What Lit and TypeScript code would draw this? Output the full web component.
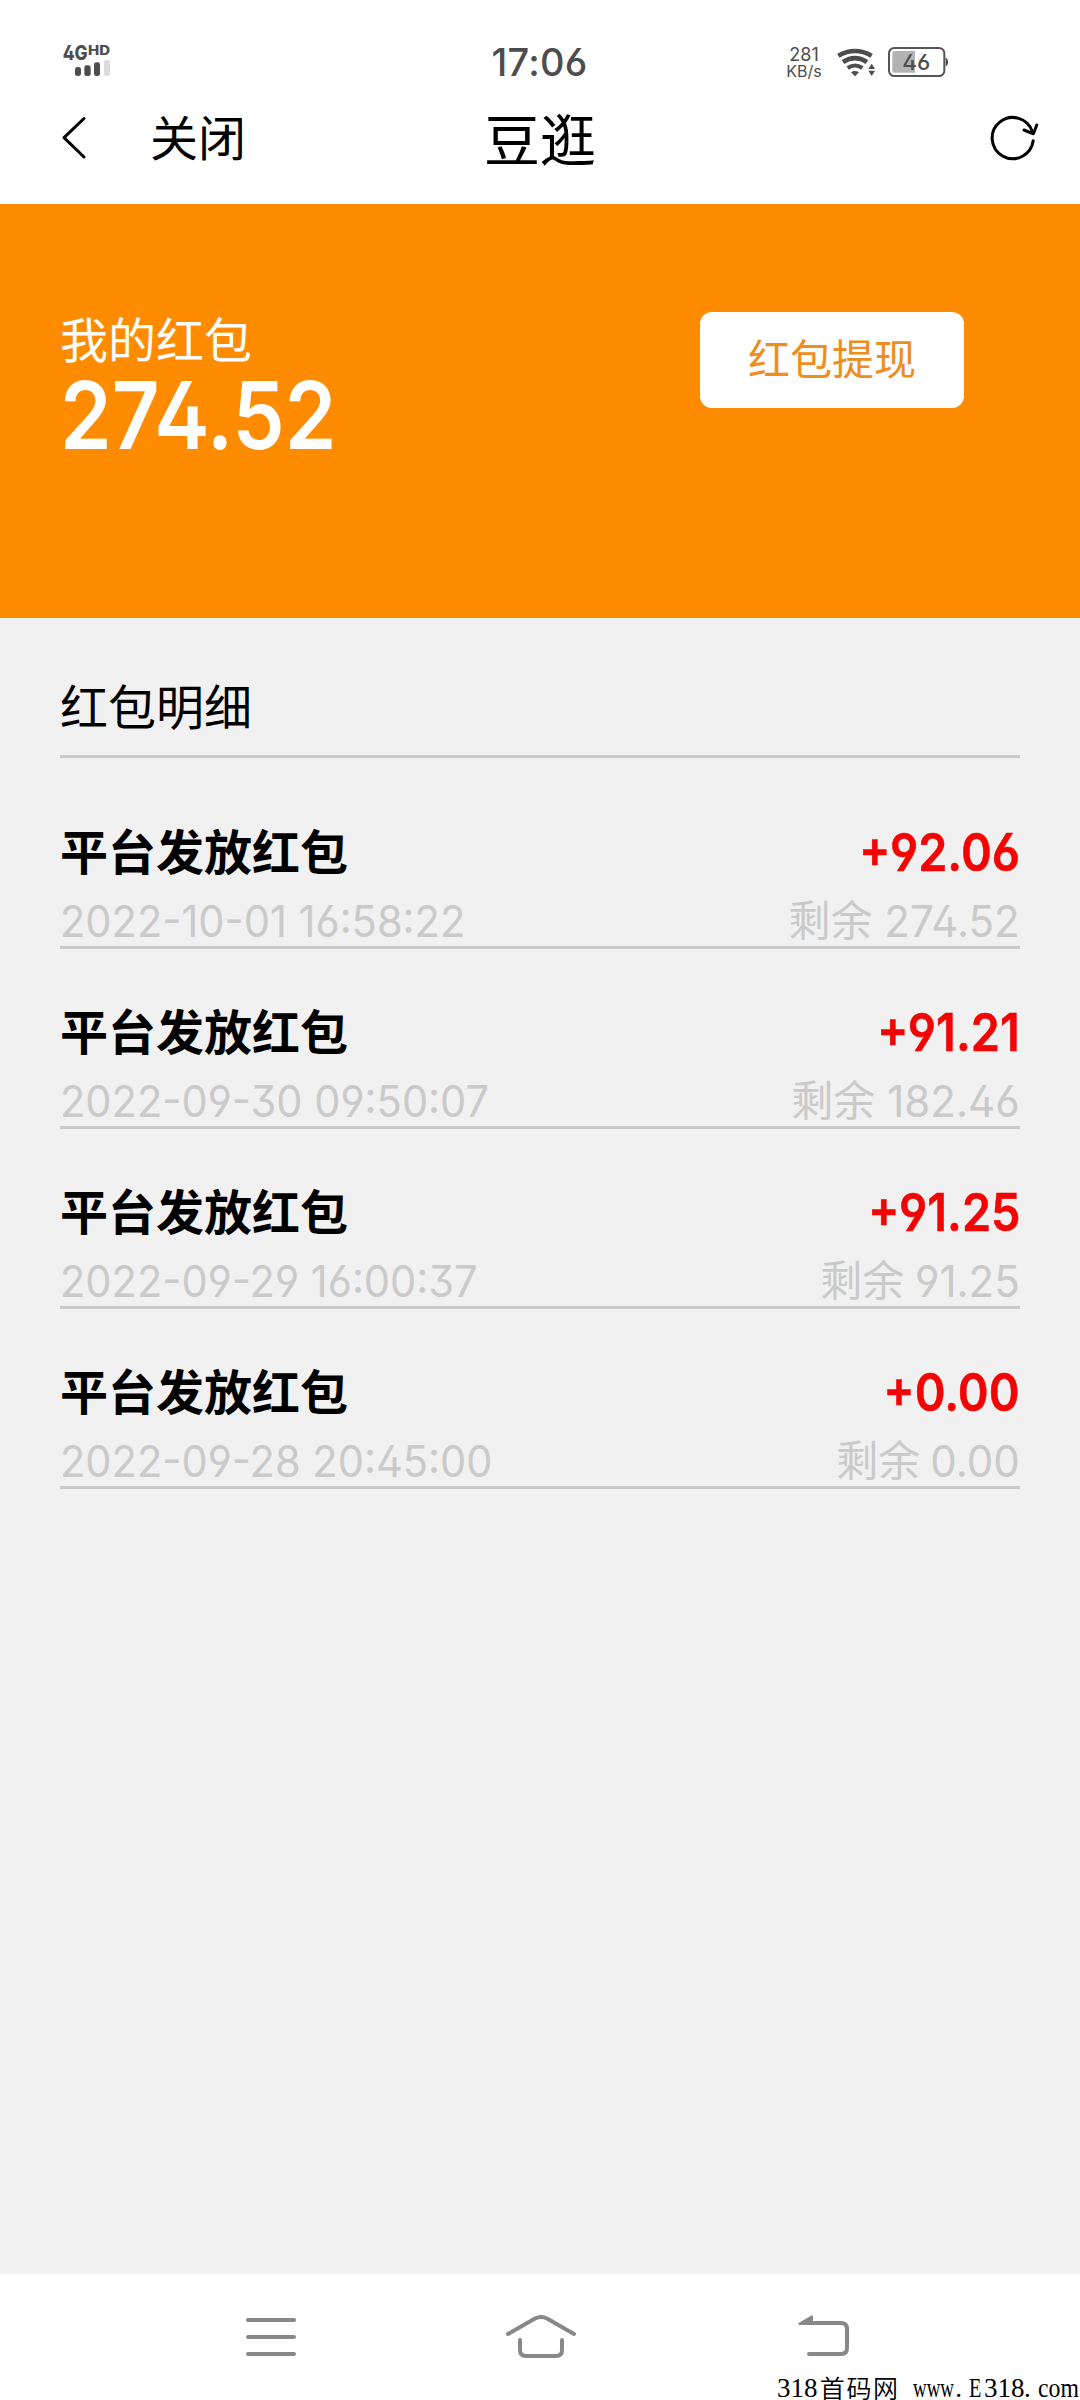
import { LitElement, html, css } from "lit";
import { customElement, property } from "lit/decorators.js";

interface Entry {
  title: string;
  amount: string;
  time: string;
  balance: string;
}

const ENTRIES: Entry[] = [
  { title: "平台发放红包", amount: "+92.06", time: "2022-10-01 16:58:22", balance: "274.52" },
  { title: "平台发放红包", amount: "+91.21", time: "2022-09-30 09:50:07", balance: "182.46" },
  { title: "平台发放红包", amount: "+91.25", time: "2022-09-29 16:00:37", balance: "91.25" },
  { title: "平台发放红包", amount: "+0.00", time: "2022-09-28 20:45:00", balance: "0.00" },
];

@customElement("status-bar")
class StatusBar extends LitElement {
  static styles = css`
    :host { display: grid; grid-template-columns: 1fr auto 1fr; height: 84px; padding: 40px 132px 0 60px; box-sizing: border-box; color: #4d4d4d; }
    svg { display: block; overflow: visible; }
    .time { font-size: 38px; font-weight: 500; line-height: 45px; letter-spacing: 0.2px; margin-left: 71px; }
    .right { display: flex; justify-content: flex-end; }
    .speed { display: flex; flex-direction: column; align-items: center; font-size: 18px; line-height: 17px; padding-top: 6px; width: 36px; }
    .unit { font-size: 16px; line-height: 17px; }
    .wifi { margin-left: 14px; }
    .battery { margin-left: 12px; }
  `;
  render() {
    return html`
      <svg width="52" height="40" viewBox="0 0 156 120">
        <g fill="#4d4d4d" font-weight="800">
          <text x="8" y="60" font-size="60" textLength="75" lengthAdjust="spacingAndGlyphs">4G</text>
          <text x="84" y="44" font-size="38" textLength="66" lengthAdjust="spacingAndGlyphs">HD</text>
          <rect x="45" y="81" width="18" height="27" rx="8" />
          <rect x="73" y="76" width="19" height="32" rx="7" />
          <rect x="102" y="67" width="18" height="41" rx="7" />
        </g>
        <rect x="132" y="60" width="18" height="48" rx="7" fill="#dcdcdc" />
      </svg>
      <div class="time">17:06</div>
      <div class="right">
        <div class="speed"><span>281</span><span class="unit">KB/s</span></div>
        <svg class="wifi" width="40" height="40" viewBox="288 60 120 120">
          <g fill="none" stroke="#4d4d4d" stroke-width="14">
            <path d="M295 107Q345 79 395 107" />
            <path d="M309 126Q345 103 381 126" />
            <path d="M323 144Q345 129 367 144" stroke-width="12" />
          </g>
          <path d="M333 157Q345 149 357 157L345 169Z" fill="#4d4d4d" />
          <path d="M385 147L395 131L405 147ZM385 152L395 168L405 152Z" fill="#4d4d4d" />
        </svg>
        <svg class="battery" width="60" height="40" viewBox="441 60 180 120">
          <rect x="444" y="84" width="166" height="84" rx="16" fill="#fff" stroke="#555" stroke-width="6" />
          <path d="M460 93H522V158H460Q454 158 454 152V99Q454 93 460 93Z" fill="#b3b3b3" />
          <path d="M614 113Q621 115 621 126Q621 137 614 139Z" fill="#4d4d4d" />
          <text x="484" y="151" font-size="65" font-weight="500" fill="#4d4d4d" textLength="84" lengthAdjust="spacingAndGlyphs">46</text>
        </svg>
      </div>
    `;
  }
}

@customElement("title-bar")
class TitleBar extends LitElement {
  static styles = css`
    :host { display: grid; grid-template-columns: 1fr auto 1fr; align-items: center; height: 120px; padding: 0 42px 12px 60px; box-sizing: border-box; color: #000; }
    svg { display: block; overflow: visible; }
    .left { display: flex; align-items: center; gap: 60px; font-size: 48px; line-height: 60px; }
    .close { padding-top: 2px; }
    .title { font-size: 56px; line-height: 64px; font-weight: 400; padding-top: 6px; margin: 0 18px 0 0; }
    .reload { justify-self: end; margin-bottom: 2px; }
  `;
  render() {
    return html`
      <div class="left">
        <svg width="30" height="48" viewBox="0 0 30 48" fill="none" stroke="#000" stroke-width="3" stroke-linecap="round" stroke-linejoin="round">
          <path d="M24 4.5L4 23.7L24 43" />
        </svg>
        <span class="close">关闭</span>
      </div>
      <h1 class="title">豆逛</h1>
      <svg class="reload" width="50" height="48" viewBox="0 0 50 48" fill="none" stroke="#000" stroke-width="3" stroke-linecap="round" stroke-linejoin="round">
        <path d="M45.2 27.8A20.6 20.6 0 1 1 44.4 18.8" />
        <path d="M36 17L45.4 20.8L48.8 12" />
      </svg>
    `;
  }
}

@customElement("balance-panel")
class BalancePanel extends LitElement {
  static styles = css`
    :host { display: flex; justify-content: space-between; align-items: flex-start; height: 414px; padding: 108px 116px 0 60px; box-sizing: border-box; background: #ff8c00; color: #fff; }
    .label { font-size: 48px; line-height: 56px; padding-top: 1px; }
    .total { font-size: 94px; line-height: 93px; font-weight: 600; transform: scaleX(0.883); transform-origin: 0 50%; }
    .withdraw { width: 264px; height: 96px; padding: 0 0 1px; box-sizing: border-box; border: 0; border-radius: 12px; background: #fff; color: #ee8d20; font: inherit; font-size: 42px; line-height: 60px; white-space: nowrap; }
  `;
  render() {
    return html`
      <div>
        <div class="label">我的红包</div>
        <div class="total">274.52</div>
      </div>
      <button class="withdraw">红包提现</button>
    `;
  }
}

@customElement("entry-row")
class EntryRow extends LitElement {
  static styles = css`
    :host { display: flex; flex-direction: column; gap: 17px; height: 180px; padding-top: 58px; box-sizing: border-box; border-bottom: 3px solid #cacaca; }
    .line { display: flex; justify-content: space-between; white-space: nowrap; }
    .head { line-height: 52px; font-weight: 700; }
    .title { font-size: 48px; color: #000; }
    .amount { font-size: 52px; font-weight: 600; color: #f30404; transform: scaleX(0.9); transform-origin: 100% 50%; -webkit-text-stroke: 0.5px #f30404; }
    .meta { line-height: 50px; color: #cacaca; font-weight: 400; font-size: 44px; }
    .time { transform: scaleX(0.945); transform-origin: 0 50%; }
    .rest { display: flex; justify-content: flex-end; gap: 10px; }
    .value { transform: scaleX(0.955); transform-origin: 100% 50%; margin-left: -4px; }
    .word { font-size: 42px; }
  `;
  @property({ attribute: false }) entry!: Entry;
  render() {
    const { title, amount, time, balance } = this.entry;
    return html`
      <div class="line head"><span class="title">${title}</span><span class="amount">${amount}</span></div>
      <div class="line meta">
        <span class="time">${time}</span>
        <span class="rest"><span class="word">剩余</span><span class="value">${balance}</span></span>
      </div>
    `;
  }
}

@customElement("system-nav")
class SystemNav extends LitElement {
  static styles = css`
    :host { display: flex; position: relative; height: 126px; padding: 35px 0 0 245px; box-sizing: border-box; background: #fff; }
    svg { display: block; overflow: visible; fill: none; stroke: #888; stroke-width: 4; stroke-linecap: round; stroke-linejoin: round; }
    .solid { fill: #888; stroke: none; }
    .home { margin: 0 224px 0 209px; }
    .mark { position: absolute; right: 0; bottom: -3px; width: 303px; height: 30px; display: flex; color: #000; font: 27px/30px "Liberation Serif", "Noto Sans CJK SC", serif; white-space: pre; }
    .cjk { font: 350 25px/28px "Noto Sans CJK SC", sans-serif; letter-spacing: 1.6px; width: 91px; padding-left: 2px; box-sizing: border-box; }
    .num { width: 41px; }
    .www { display: block; width: 42px; margin-left: -2px; transform: scaleX(0.7); transform-origin: 0 50%; }
    .dot { width: 14px; }
    .site { width: 55px; }
    .e { display: inline-block; width: 15px; transform: scaleX(0.75); transform-origin: 0 50%; }
    .com { width: 42px; transform: scaleX(0.88); transform-origin: 0 50%; }
  `;
  render() {
    return html`
      <svg width="52" height="46" viewBox="0 0 52 46"><path d="M3 11H49M3 28H49M3 45H49" /></svg>
      <svg class="home" width="70" height="46" viewBox="0 0 70 46">
        <path d="M2 25L29 9.5Q35 6.5 41 9.5L68 25" />
        <path d="M14 31V41Q14 47 20 47H50Q56 47 56 41V31" />
      </svg>
      <svg width="52" height="46" viewBox="0 0 52 46">
        <path d="M4 14H41Q47 14 47 20V39Q47 45 41 45H9" />
        <path class="solid" d="M-1.5 14L12 6.2Q13 6 13 7V16H0Q-2.5 15.5 -1.5 14Z" />
      </svg>
      <div class="mark"><span class="num">318</span><span class="cjk">首码网</span><span>&nbsp;</span><span class="www">www</span><span class="dot">.</span><span class="site"><span class="e">E</span>318</span><span class="dot">.</span><span class="com">com</span></div>
    `;
  }
}

@customElement("app-root")
class AppRoot extends LitElement {
  static styles = css`
    :host { display: flex; flex-direction: column; width: 1080px; height: 2400px; overflow: hidden; background: #fff; font-family: Inter, "Noto Sans CJK SC", sans-serif; font-feature-settings: "ss01" 1; }
    .details { flex: 1; padding: 42px 60px 0; background: #f1f1f1; }
    .heading { margin: 0 0 11px; font-size: 48px; line-height: 95px; font-weight: 400; border-bottom: 3px solid #cacaca; color: #000; }
  `;
  render() {
    return html`
      <status-bar></status-bar>
      <title-bar></title-bar>
      <balance-panel></balance-panel>
      <main class="details">
        <h2 class="heading">红包明细</h2>
        ${ENTRIES.map((e) => html`<entry-row .entry=${e}></entry-row>`)}
      </main>
      <system-nav></system-nav>
    `;
  }
}
